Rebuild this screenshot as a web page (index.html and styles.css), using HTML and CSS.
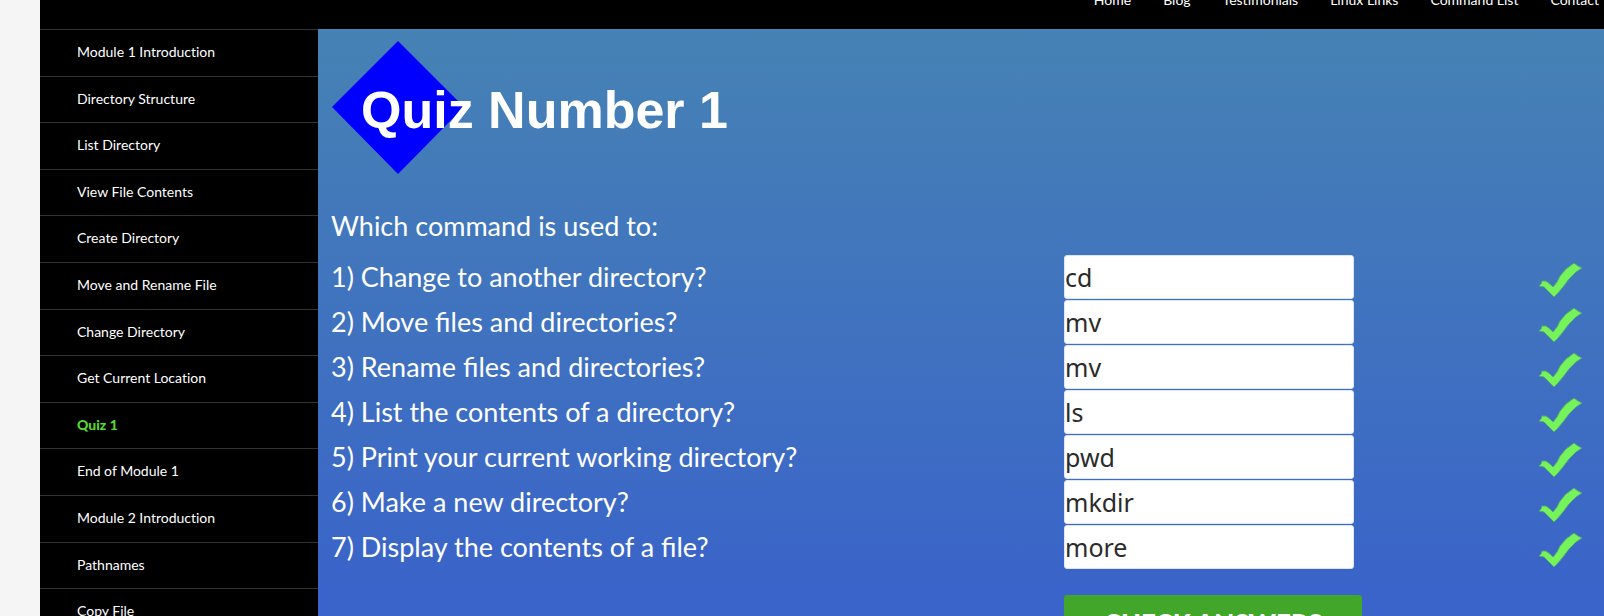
FILE: index.html
```html
<!DOCTYPE html>
<html lang="en">
<head>
<meta charset="utf-8">
<title>Quiz Number 1</title>
<link rel="stylesheet" href="styles.css">
</head>
<body>
<svg class="sprite" aria-hidden="true">
  <symbol id="tick" viewBox="0 0 44 36">
    <path d="M1 24 L3 22 L4 19 L8 19 L12 22 L15 25 L19 20 L22 14 L28 7 L32 4 L36 1 L40 4 L44 6 L38 10 L31 17 L25 25 L20 31 L16 35 L10 29 L6 25 Z" fill="#74f35a" stroke="#5aa37c" stroke-width="1"/>
  </symbol>
</svg>
<div class="site">
  <header class="header">
    <nav class="menu" aria-label="Primary">
      <a href="#">Home</a>
      <a href="#">Blog</a>
      <a href="#">Testimonials</a>
      <a href="#">Linux Links</a>
      <a href="#">Command List</a>
      <a href="#">Contact</a>
    </nav>
  </header>
  <div class="columns">
    <nav class="sidebar" aria-label="Lessons">
      <a href="#">Module 1 Introduction</a>
      <a href="#">Directory Structure</a>
      <a href="#">List Directory</a>
      <a href="#">View File Contents</a>
      <a href="#">Create Directory</a>
      <a href="#">Move and Rename File</a>
      <a href="#">Change Directory</a>
      <a href="#">Get Current Location</a>
      <a href="#" class="current" aria-current="page">Quiz 1</a>
      <a href="#">End of Module 1</a>
      <a href="#">Module 2 Introduction</a>
      <a href="#">Pathnames</a>
      <a href="#">Copy File</a>
    </nav>
    <main class="quiz">
      <h1 class="title">
        <svg class="diamond" viewBox="0 0 134 134" aria-hidden="true"><path d="M67 0 L133 66 L67 133 L1 66 Z" fill="#0000ff"/></svg>
        <span class="title-text">Quiz Number 1</span>
      </h1>
      <p class="lead">Which command is used to:</p>
      <form class="form">
        <div class="row"><label for="q1">1) Change to another directory?</label><input id="q1" type="text" value="cd"><svg class="tick" role="img" aria-label="Correct"><use href="#tick"/></svg></div>
        <div class="row"><label for="q2">2) Move files and directories?</label><input id="q2" type="text" value="mv"><svg class="tick" role="img" aria-label="Correct"><use href="#tick"/></svg></div>
        <div class="row"><label for="q3">3) Rename files and directories?</label><input id="q3" type="text" value="mv"><svg class="tick" role="img" aria-label="Correct"><use href="#tick"/></svg></div>
        <div class="row"><label for="q4">4) List the contents of a directory?</label><input id="q4" type="text" value="ls"><svg class="tick" role="img" aria-label="Correct"><use href="#tick"/></svg></div>
        <div class="row"><label for="q5">5) Print your current working directory?</label><input id="q5" type="text" value="pwd"><svg class="tick" role="img" aria-label="Correct"><use href="#tick"/></svg></div>
        <div class="row"><label for="q6">6) Make a new directory?</label><input id="q6" type="text" value="mkdir"><svg class="tick" role="img" aria-label="Correct"><use href="#tick"/></svg></div>
        <div class="row"><label for="q7">7) Display the contents of a file?</label><input id="q7" type="text" value="more"><svg class="tick" role="img" aria-label="Correct"><use href="#tick"/></svg></div>
        <div class="row actions"><button type="button">CHECK ANSWERS</button></div>
      </form>
    </main>
  </div>
</div>
</body>
</html>
```
FILE: styles.css
```css
* {
  box-sizing: border-box;
}

body {
  margin: 0;
  height: 100vh;
  overflow: hidden;
  background: #f5f5f5;
  font-family: Lato, sans-serif;
}

.sprite {
  display: none;
}

.site {
  margin-left: 40px;
}

/* The header is scrolled partly out of view. */
.header {
  display: flex;
  align-items: center;
  justify-content: flex-end;
  height: 60px;
  margin-top: -31px;
  padding-right: 5px;
  background: #000;
}

.menu {
  display: flex;
  gap: 32px;
}

.menu a,
.sidebar a {
  color: #fff;
  font-size: 14px;
  text-decoration: none;
}

.columns {
  display: grid;
  grid-template-columns: 278px 1fr;
}

.sidebar {
  background: #000;
}

.sidebar a {
  display: block;
  padding: 12px 37px 14px;
  border-top: 1px solid #333;
  font-variant-ligatures: none;
  line-height: 1.4;
}

.sidebar .current {
  color: #55d737;
  font-weight: 900;
}

.quiz {
  padding: 12px 13px 0;
  background: linear-gradient(#4682b4, #3a64c9 560px);
  color: #fff;
}

.title {
  display: flex;
  align-items: center;
  margin: 0;
}

.diamond {
  width: 134px;
  height: 134px;
}

.title-text {
  margin-left: -104px;
  padding-top: 4px;
  font: bold 52px "Liberation Sans", Arial, sans-serif;
}

.lead {
  margin: 31px 0 8px;
  font-size: 27px;
  line-height: 40px;
}

.row {
  display: grid;
  grid-template-columns: 733px 290px 1fr;
  align-items: center;
  height: 45px;
}

.row label {
  font-size: 27px;
}

.row input {
  width: 100%;
  height: 44px;
  padding: 0;
  border: 1px solid #dde6f5;
  border-radius: 3px;
  background: #fff;
  color: #2b2b2b;
  font: 25px "Noto Sans", sans-serif;
}

.tick {
  justify-self: end;
  width: 46px;
  height: 36px;
  margin: 6px 8px 0 0;
}

.actions {
  height: auto;
  padding: 26px 0;
}

.actions button {
  grid-column: 2;
  width: 298px;
  height: 55px;
  border: 0;
  border-radius: 3px;
  background: #41a62a;
  color: #fff;
  font: 900 26px Lato, sans-serif;
}
```
